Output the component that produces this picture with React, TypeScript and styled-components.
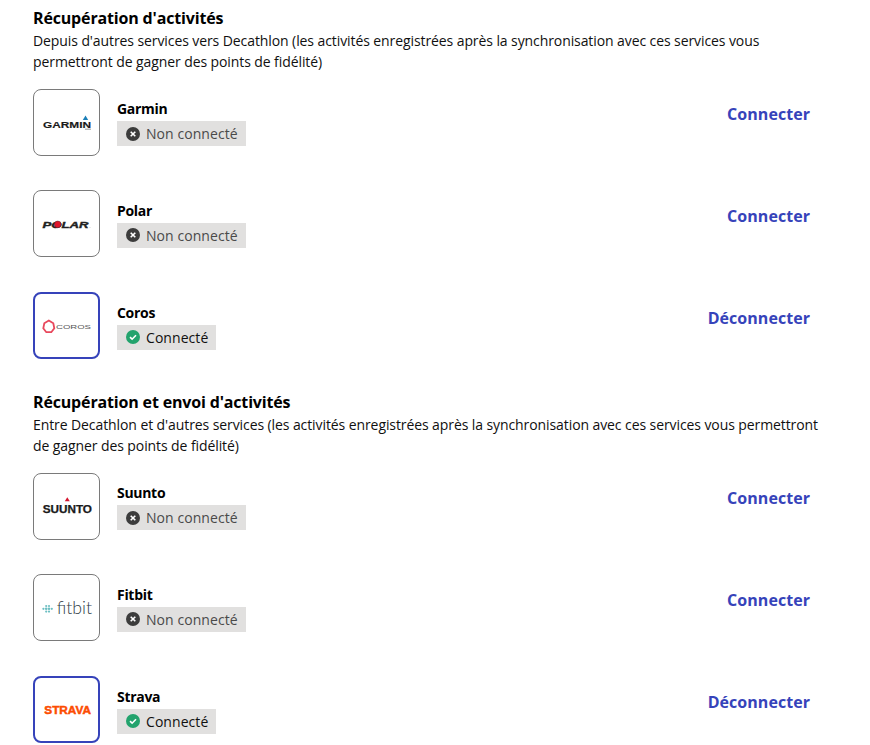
import styled, { createGlobalStyle } from "styled-components";

const Global = createGlobalStyle`
  html, body {
    margin: 0;
    background: #fff;
    overflow: hidden;
  }
`;

const Page = styled.div`
  height: 745px;
  overflow: hidden;
  padding: 8px 47px 0 33px;
  font-family: "Open Sans", "Noto Sans", sans-serif;
  color: #101010;
`;

const Section = styled.section`
  margin-bottom: 32.9px;
`;

const Title = styled.h2`
  margin: 0;
  font-size: 16px;
  line-height: 21px;
  font-weight: 700;
  color: #000;
  letter-spacing: -0.16px;
`;

const Description = styled.p`
  margin: 1px 0 16.6px;
  font-size: 14px;
  line-height: 21px;
  letter-spacing: -0.09px;
  color: #101010;
`;

const List = styled.div`
  display: flex;
  flex-direction: column;
  gap: 34.75px;
  padding-right: 13px;
`;

const Row = styled.div`
  display: flex;
  align-items: center;
  gap: 17px;
  height: 67px;
`;

const LogoBox = styled.div<{ $active: boolean }>`
  box-sizing: border-box;
  width: 67px;
  height: 67px;
  flex: none;
  display: flex;
  align-items: center;
  justify-content: center;
  border-radius: 8px;
  border: ${(p) => (p.$active ? "2px solid #3643ba" : "1px solid #7a7a7a")};
`;

const Info = styled.div`
  flex: 1;
  display: flex;
  flex-direction: column;
  align-items: flex-start;
  gap: 2px;
  padding-top: 1px;
`;

const Name = styled.div`
  font-size: 14px;
  line-height: 20px;
  font-weight: 700;
  color: #000;
  letter-spacing: -0.3px;
`;

const Badge = styled.div`
  display: flex;
  align-items: center;
  gap: 6px;
  height: 25px;
  padding: 0 8px 0 9px;
  background: #e1e0df;
  font-size: 14px;
  letter-spacing: 0.06px;
`;

const BadgeLabel = styled.span<{ $muted: boolean }>`
  color: ${(p) => (p.$muted ? "#4a4a4a" : "#101010")};
`;

const Action = styled.a`
  align-self: flex-start;
  margin-top: 13.5px;
  font-size: 16px;
  line-height: 24px;
  font-weight: 700;
  color: #3643ba;
  letter-spacing: 0.05px;
  cursor: pointer;
`;

const StatusIcon = ({ connected }: { connected: boolean }) => (
  <svg width="14" height="14" viewBox="0 0 14 14">
    <circle cx="7" cy="7" r="7" fill={connected ? "#23a36d" : "#3c3c3c"} />
    {connected ? (
      <path d="M4 7.2l2.1 2L10 5.2" fill="none" stroke="#fff" strokeWidth="1.6" />
    ) : (
      <path d="M4.7 4.7l4.6 4.6M9.3 4.7l-4.6 4.6" fill="none" stroke="#fff" strokeWidth="1.6" />
    )}
  </svg>
);

const Garmin = () => (
  <svg width="60" height="24" viewBox="0 0 60 24">
    <path d="M48.500 5.500l2.700 4.500h-5.400z" fill="#1b7fb8" />
    <text x="6" y="18" fontFamily="Liberation Sans" fontWeight="700" fontSize="9" textLength="48" lengthAdjust="spacingAndGlyphs" fill="#1a1a1a" stroke="#1a1a1a" strokeWidth="0.15">
      GARMIN
    </text>
    <rect x="48" y="18.800" width="6" height="0.6" fill="#555" />
  </svg>
);

const Polar = () => (
  <svg width="60" height="16" viewBox="0 0 60 16">
    <text x="5.500" y="11.700" fontFamily="Liberation Sans" fontWeight="700" fontStyle="italic" fontSize="9.500" textLength="46" lengthAdjust="spacingAndGlyphs" fill="#222" stroke="#222" strokeWidth="0.4">
      POLAR
    </text>
    <circle cx="20.700" cy="8.400" r="3.400" fill="#e0162b" stroke="#222" strokeWidth="0.4" />
    <circle cx="53" cy="11.300" r="0.4" fill="#888" />
  </svg>
);

const Coros = () => (
  <svg width="60" height="20" viewBox="0 0 60 20">
    <path d="M11.800 4.500l4.500 2.800 1 5-3 3.900h-5l-3-3.900 1-5z" fill="none" stroke="#e8485c" strokeWidth="1.800" />
    <text x="19" y="12.800" fontFamily="Liberation Sans" fontSize="6" textLength="35" lengthAdjust="spacingAndGlyphs" fill="#555">
      COROS
    </text>
  </svg>
);

const Suunto = () => (
  <svg width="60" height="24" viewBox="0 0 60 24">
    <path d="M30.300 3.200l2.500 4h-5z" fill="#d5152e" />
    <text x="5.700" y="19.200" fontFamily="Liberation Sans" fontWeight="700" fontSize="10" textLength="49.300" lengthAdjust="spacingAndGlyphs" fill="#1a1a1a" stroke="#1a1a1a" strokeWidth="0.25">
      SUUNTO
    </text>
  </svg>
);

const fitbitDots = [
  [6.400, 10.800, 1.100],
  [9.200, 10.800, 1.300],
  [12, 10.800, 1.300],
  [14.800, 10.800, 1.100],
  [9.200, 8, 1.100],
  [12, 8, 1.100],
  [9.200, 13.600, 1.100],
  [12, 13.600, 1.100],
];

const Fitbit = () => (
  <svg width="60" height="20" viewBox="0 0 60 20">
    {fitbitDots.map(([cx, cy, r]) => (
      <circle key={`${cx}-${cy}`} cx={cx} cy={cy} r={r} fill="#6dbfc2" />
    ))}
    <text x="19.700" y="15.800" fontFamily="Lato" fontWeight="300" fontSize="17" textLength="35.300" lengthAdjust="spacingAndGlyphs" fill="#2f3d45">
      fitbit
    </text>
  </svg>
);

const Strava = () => (
  <svg width="60" height="16" viewBox="0 0 60 16">
    <text x="7.300" y="12.300" fontFamily="Liberation Sans" fontWeight="700" fontSize="11.800" textLength="46.700" lengthAdjust="spacingAndGlyphs" fill="#fc4c02" stroke="#fc4c02" strokeWidth="0.5">
      STRAVA
    </text>
  </svg>
);

type Service = { name: string; logo: React.ReactNode; connected: boolean };

const ServiceRow = ({ name, logo, connected }: Service) => (
  <Row>
    <LogoBox $active={connected}>{logo}</LogoBox>
    <Info>
      <Name>{name}</Name>
      <Badge>
        <StatusIcon connected={connected} />
        <BadgeLabel $muted={!connected}>{connected ? "Connecté" : "Non connecté"}</BadgeLabel>
      </Badge>
    </Info>
    <Action>{connected ? "Déconnecter" : "Connecter"}</Action>
  </Row>
);

const fetchOnly: Service[] = [
  { name: "Garmin", logo: <Garmin />, connected: false },
  { name: "Polar", logo: <Polar />, connected: false },
  { name: "Coros", logo: <Coros />, connected: true },
];

const fetchAndSend: Service[] = [
  { name: "Suunto", logo: <Suunto />, connected: false },
  { name: "Fitbit", logo: <Fitbit />, connected: false },
  { name: "Strava", logo: <Strava />, connected: true },
];

export default function App() {
  return (
    <>
      <Global />
      <Page>
        <Section>
          <Title>Récupération d'activités</Title>
          <Description>
            Depuis d'autres services vers Decathlon (les activités enregistrées après la synchronisation avec ces services vous permettront de gagner des points de fidélité)
          </Description>
          <List>
            {fetchOnly.map((s) => (
              <ServiceRow key={s.name} {...s} />
            ))}
          </List>
        </Section>
        <Section>
          <Title>Récupération et envoi d'activités</Title>
          <Description>
            Entre Decathlon et d'autres services (les activités enregistrées après la synchronisation avec ces services vous permettront de gagner des points de fidélité)
          </Description>
          <List>
            {fetchAndSend.map((s) => (
              <ServiceRow key={s.name} {...s} />
            ))}
          </List>
        </Section>
      </Page>
    </>
  );
}
